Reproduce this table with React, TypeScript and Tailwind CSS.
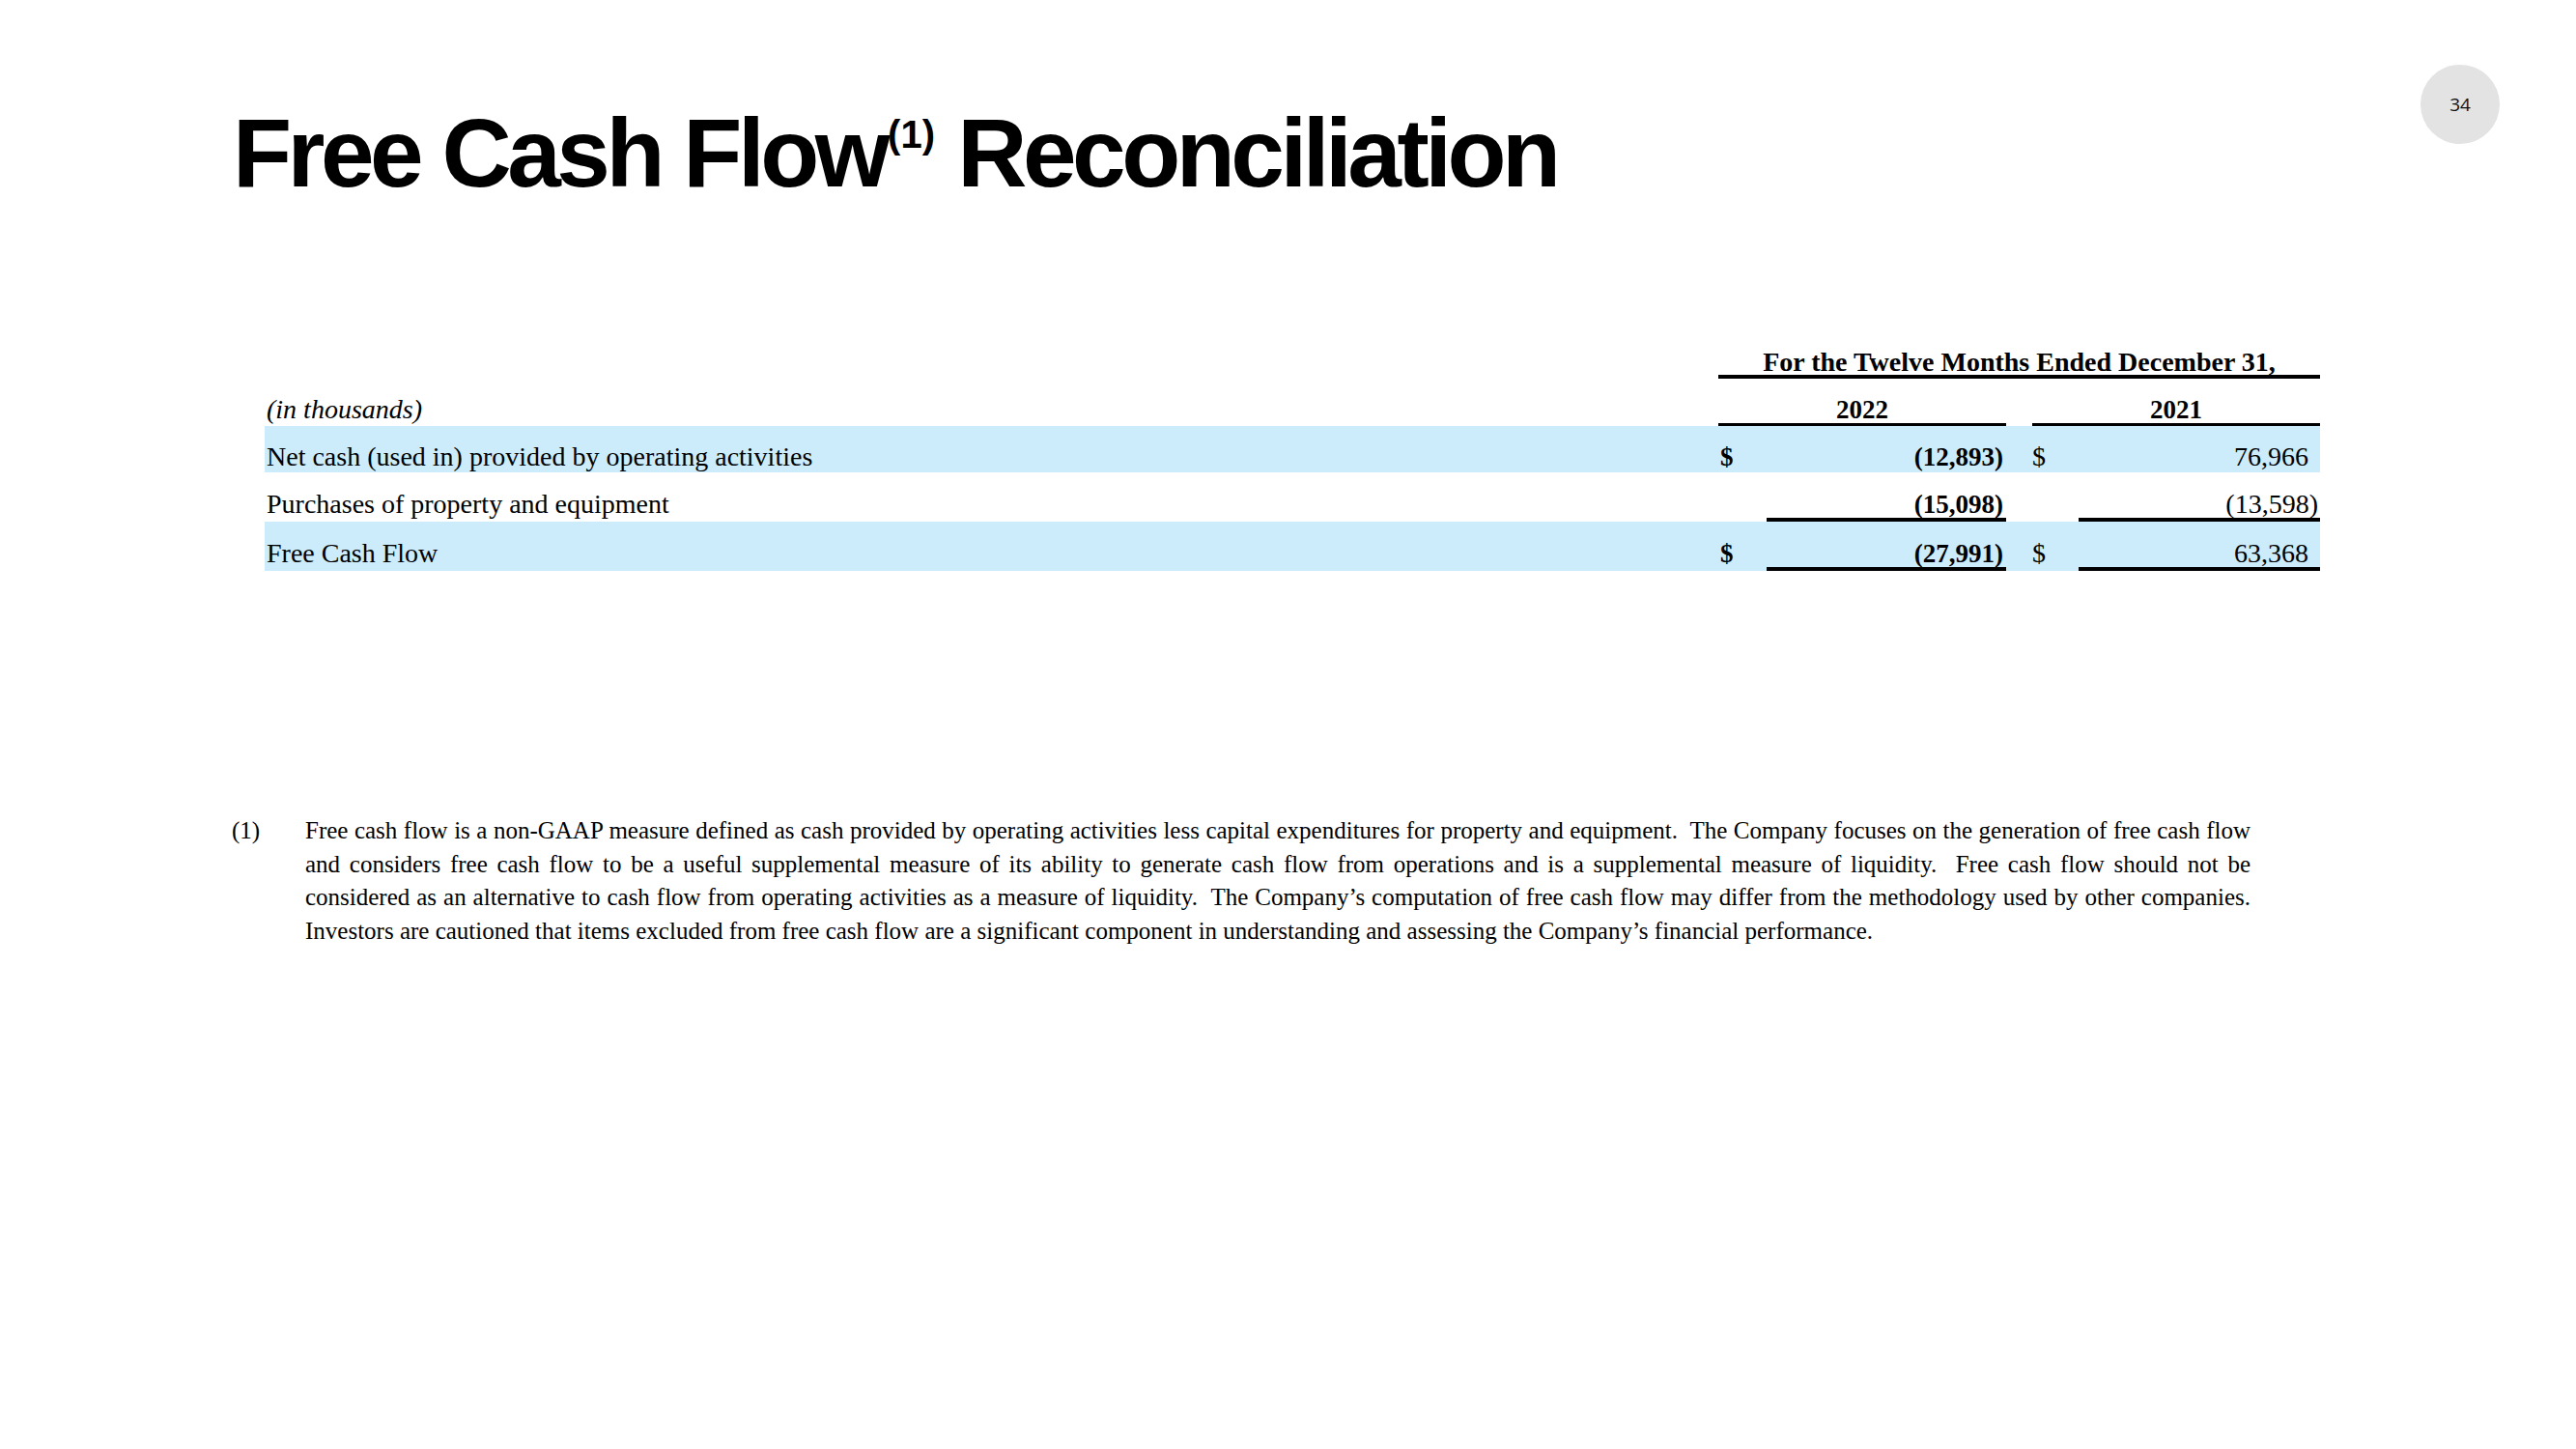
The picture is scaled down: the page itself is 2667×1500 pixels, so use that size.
type Row = {
  label: string
  dollar: boolean
  v2022: string
  v2021: string
  shaded: boolean
  underline: boolean
}

const rows: Row[] = [
  {
    label: 'Net cash (used in) provided by operating activities',
    dollar: true,
    v2022: '(12,893)',
    v2021: '76,966',
    shaded: true,
    underline: false,
  },
  {
    label: 'Purchases of property and equipment',
    dollar: false,
    v2022: '(15,098)',
    v2021: '(13,598)',
    shaded: false,
    underline: true,
  },
  {
    label: 'Free Cash Flow',
    dollar: true,
    v2022: '(27,991)',
    v2021: '63,368',
    shaded: true,
    underline: true,
  },
]

// footnote lines are kept as in the deck so the wrapping matches
const noteLines = [
  'Free cash flow is a non-GAAP measure defined as cash provided by operating activities less capital expenditures for property and equipment.\u00a0 The Company focuses on the generation of free cash flow',
  'and considers free cash flow to be a useful supplemental measure of its ability to generate cash flow from operations and is a supplemental measure of liquidity.\u00a0 Free cash flow should not be',
  'considered as an alternative to cash flow from operating activities as a measure of liquidity.\u00a0 The Company’s computation of free cash flow may differ from the methodology used by other companies.',
  'Investors are cautioned that items excluded from free cash flow are a significant component in understanding and assessing the Company’s financial performance.',
]

function DataRow({ row }: { row: Row }) {
  const border = row.underline ? 'border-b-4' : 'border-b-0'
  return (
    <div
      className={`flex ${row.underline ? 'h-[51px]' : 'h-[48px] pb-[2px]'} ${
        row.shaded ? 'bg-[#ccecfb]' : 'bg-white'
      }`}
    >
      <div className={`flex w-[1505px] items-end pl-[2px] ${border} border-transparent`}>
        <span className="text-[28px] leading-[28px]">{row.label}</span>
      </div>
      <div className={`flex w-[50px] items-end pl-[2px] ${border} border-transparent`}>
        <span className="text-[27px] font-bold leading-[28px]">{row.dollar ? '$' : ''}</span>
      </div>
      <div className={`flex w-[248px] items-end justify-end pr-[3px] ${border} border-black`}>
        <span className="text-[27px] font-bold leading-[28px]">{row.v2022}</span>
      </div>
      <div className={`w-[27px] ${border} border-transparent`} />
      <div className={`flex w-[48px] items-end ${border} border-transparent`}>
        <span className="text-[28px] leading-[28px]">{row.dollar ? '$' : ''}</span>
      </div>
      <div
        className={`flex w-[250px] items-end justify-end ${
          row.v2021.startsWith('(') ? 'pr-[2px]' : 'pr-[12px]'
        } ${border} border-black`}
      >
        <span className="text-[28px] leading-[28px]">{row.v2021}</span>
      </div>
    </div>
  )
}

export default function App() {
  return (
    <div className="h-[1500px] w-[2667px] overflow-hidden bg-white pt-[67px] text-black">
      <div className="flex items-start justify-between pl-[241px] pr-[79px]">
        <h1 className="mt-[41px] whitespace-nowrap font-['Liberation_Sans',Arial,sans-serif] text-[100px] font-bold leading-[100px] tracking-[-0.045em]">
          Free Cash Flow
          <span className="ml-[2px] align-[40px] text-[40px] leading-none tracking-normal">(1)</span> Reconciliation
        </h1>
        <div className="flex h-[82px] w-[82px] items-center justify-center rounded-full bg-[#e3e3e3] font-['Open_Sans','Liberation_Sans',sans-serif] text-[19px] text-[#111]">
          34
        </div>
      </div>

      <div className="ml-[274px] mt-[153px] w-[2128px] font-['Liberation_Serif','Times_New_Roman',serif]">
        <div className="flex h-[31px]">
          <div className="w-[1505px]" />
          <div className="flex w-[623px] items-end justify-center border-b-4 border-black">
            <span className="text-[28px] font-bold leading-[27px]">
              For the Twelve Months Ended December 31,
            </span>
          </div>
        </div>

        <div className="flex h-[49px]">
          <div className="flex w-[1505px] items-end pb-[3px] pl-[2px]">
            <span className="text-[28px] italic leading-[28px]">(in thousands)</span>
          </div>
          <div className="flex w-[298px] items-end justify-center border-b-[3px] border-black">
            <span className="text-[27px] font-bold leading-[27px]">2022</span>
          </div>
          <div className="w-[27px]" />
          <div className="flex w-[298px] items-end justify-center border-b-[3px] border-black">
            <span className="text-[27px] font-bold leading-[27px]">2021</span>
          </div>
        </div>

        {rows.map((row) => (
          <DataRow key={row.label} row={row} />
        ))}
      </div>

      <div className="ml-[240px] mt-[252px] flex font-['Liberation_Serif','Times_New_Roman',serif] text-[25px] leading-[34.6px]">
        <div className="w-[76px]">(1)</div>
        <div className="w-[2014px]">
          {noteLines.map((line, i) => (
            <div
              key={i}
              className={`whitespace-nowrap ${
                i < noteLines.length - 1 ? 'text-justify [text-align-last:justify]' : 'text-left'
              }`}
            >
              {line}
            </div>
          ))}
        </div>
      </div>
    </div>
  )
}
